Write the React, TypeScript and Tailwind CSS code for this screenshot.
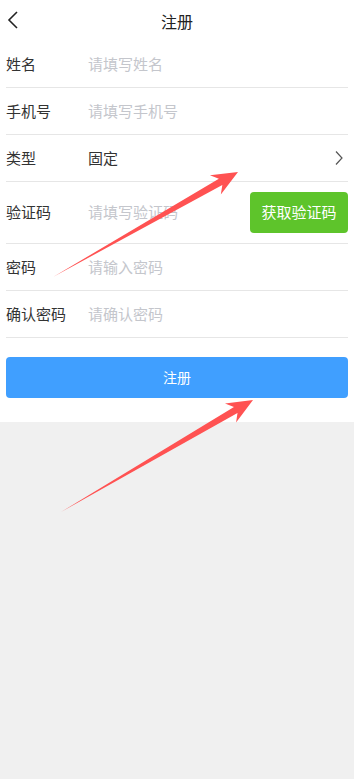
import React from "react";

const font = { fontFamily: '"Noto Sans CJK SC", "Noto Sans", sans-serif' };

type Pt = [number, number];

function arrowPoints(tail: Pt, tip: Pt): string {
  const dx = tip[0] - tail[0];
  const dy = tip[1] - tail[1];
  const len = Math.hypot(dx, dy);
  const d: Pt = [dx / len, dy / len];
  const n: Pt = [-d[1], d[0]];
  const base: Pt = [tip[0] - d[0] * 26, tip[1] - d[1] * 26];
  const neck: Pt = [tip[0] - d[0] * 20, tip[1] - d[1] * 20];
  const pts: Pt[] = [
    tail,
    [neck[0] + n[0] * 3.5, neck[1] + n[1] * 3.5],
    [base[0] + n[0] * 11, base[1] + n[1] * 11],
    tip,
    [base[0] - n[0] * 11, base[1] - n[1] * 11],
    [neck[0] - n[0] * 3.5, neck[1] - n[1] * 3.5],
  ];
  return pts.map((p) => p.join(",")).join(" ");
}

function Row({ label, children, tall }: { label: string; children: React.ReactNode; tall?: boolean }) {
  return (
    <div className={`flex items-center border-b border-[#e6e6e6] ${tall ? "h-[62px]" : "h-[47px]"}`}>
      <div className="w-[82px] shrink-0 text-[15px] text-[#333]">{label}</div>
      <div className="flex flex-1 items-center">{children}</div>
    </div>
  );
}

export default function App() {
  return (
    <div className="relative min-h-[779px] bg-[#f0f0f0]" style={font}>
      <div className="bg-white pb-[24px]">
        {/* header */}
        <div className="relative flex h-[41px] items-center justify-center">
          <svg className="absolute left-[5px] top-[9px]" width="16" height="22" viewBox="0 0 16 22">
            <path d="M12 3 L4 11 L12 19" fill="none" stroke="#222" strokeWidth="1.6" />
          </svg>
          <span className="text-[16px] text-[#222]">注册</span>
        </div>

        <div className="px-[6px]">
          <Row label="姓名">
            <span className="text-[15px] text-[#c4c6cc]">请填写姓名</span>
          </Row>
          <Row label="手机号">
            <span className="text-[15px] text-[#c4c6cc]">请填写手机号</span>
          </Row>
          <Row label="类型">
            <span className="flex-1 text-[15px] text-[#333]">固定</span>
            <svg width="10" height="16" viewBox="0 0 10 16" className="mr-[4px]">
              <path d="M2 1.5 L8 8 L2 14.5" fill="none" stroke="#555" strokeWidth="1.2" />
            </svg>
          </Row>
          <Row label="验证码" tall>
            <span className="flex-1 text-[15px] text-[#c4c6cc]">请填写验证码</span>
            <button className="h-[41px] w-[98px] rounded-[4px] bg-[#5ec42b] text-[15px] text-white">
              获取验证码
            </button>
          </Row>
          <Row label="密码">
            <span className="text-[15px] text-[#c4c6cc]">请输入密码</span>
          </Row>
          <Row label="确认密码">
            <span className="text-[15px] text-[#c4c6cc]">请确认密码</span>
          </Row>

          <button className="mt-[19px] h-[41px] w-full rounded-[4px] bg-[#409fff] text-[14px] text-white">
            注册
          </button>
        </div>
      </div>

      {/* annotation arrows */}
      <svg className="pointer-events-none absolute left-0 top-0" width="354" height="779">
        <polygon points={arrowPoints([53, 277], [238, 172])} fill="#ff5252" />
        <polygon points={arrowPoints([61, 512], [253, 400])} fill="#ff5252" />
      </svg>
    </div>
  );
}
